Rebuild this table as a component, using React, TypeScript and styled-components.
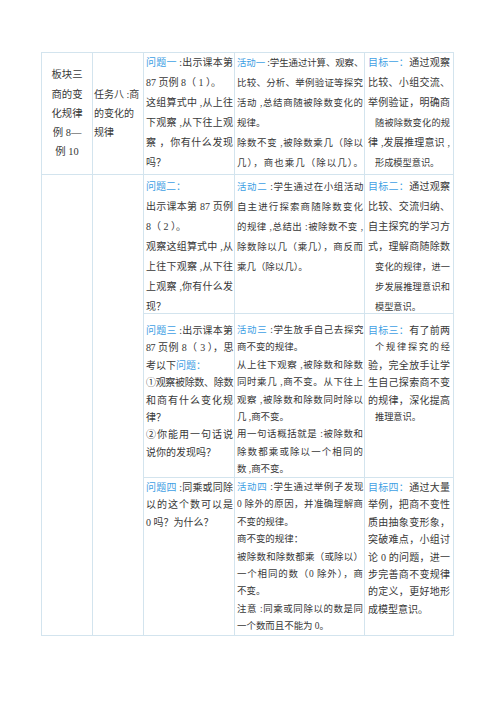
import React from "react";
import styled, { createGlobalStyle } from "styled-components";

const BORDER = "#d3e4ee";
const BLUE = "#3ea0e4";
const TEXT = "#383838";

const GlobalStyle = createGlobalStyle`
  html, body { margin: 0; padding: 0; background: #ffffff; }
  body { font-family: "Liberation Serif", "Noto Sans CJK SC", serif; }
`;

const Page = styled.div`
  width: 500px;
  height: 707px;
  box-sizing: border-box;
  padding: 52px 0 0 41px;
`;

const Table = styled.div`
  display: grid;
  grid-template-columns: 51px 51px 91px 130px 89px;
  grid-template-rows: 122px 139px 164px 158px;
  width: 413px;
  box-sizing: border-box;
  border-top: 1px solid ${BORDER};
  border-left: 1px solid ${BORDER};
  color: ${TEXT};
  font-size: 10px;
`;

const Cell = styled.div<{ $pt?: number; $lh?: number }>`
  box-sizing: border-box;
  border-right: 1px solid ${BORDER};
  border-bottom: 1px solid ${BORDER};
  padding-top: ${(p) => p.$pt ?? 0}px;
  line-height: ${(p) => p.$lh ?? 20}px;
  min-width: 0;
`;

const BlockCell = styled(Cell)`
  display: flex;
  flex-direction: column;
  justify-content: center;
  align-items: center;
  font-size: 10.4px;
  line-height: 19.3px;
  text-align: center;
`;

const TaskCell = styled(Cell)`
  display: flex;
  flex-direction: column;
  justify-content: center;
  padding-left: 1px;
  line-height: 19px;
`;

const SpanCell = styled(Cell)<{ $col: number }>`
  grid-column: ${(p) => p.$col};
  grid-row: 2 / span 3;
`;

const QuestionCell = styled(Cell)`
  padding-left: 2px;
  padding-right: 1px;
`;

const ActivityCell = styled(Cell)`
  padding-left: 2px;
  padding-right: 1px;
  font-size: 9.45px;
`;

const GoalCell = styled(Cell)`
  padding-left: 3px;
  padding-right: 3px;
`;

const Line = styled.div<{ $fill?: boolean; $indent?: boolean; $tight?: boolean }>`
  text-align: left;
  text-align-last: ${(p) => (p.$fill ? "justify" : "left")};
  padding-left: ${(p) => (p.$indent ? 7 : 0)}px;
  font-size: ${(p) => (p.$indent ? "9.2px" : "inherit")};
  letter-spacing: ${(p) => (p.$tight ? "-0.4px" : "0")};
  white-space: pre;
`;

const Label = styled.span`
  color: ${BLUE};
`;

type L = [string, string?];

const renderText = (s: string) =>
  s
    .split(/(\[[^\]]*\])/)
    .filter(Boolean)
    .map((part, i) =>
      part.startsWith("[") ? (
        <Label key={i}>{part.slice(1, -1)}</Label>
      ) : (
        <React.Fragment key={i}>{part}</React.Fragment>
      )
    );

const Lines = ({ lines }: { lines: L[] }) => (
  <>
    {lines.map(([t, f = ""], i) => (
      <Line
        key={i}
        $fill={f.includes("f")}
        $indent={f.includes("i")}
        $tight={f.includes("t")}
      >
        {renderText(t)}
      </Line>
    ))}
  </>
);

type Row = { pt: number; lh: number; q: L[]; a: L[]; g: L[] };

const rows: Row[] = [
  {
    pt: 0,
    lh: 20,
    q: [
      ["[问题一] :出示课本第", "f"],
      ["87 页例 8（ 1 ）。"],
      ["这组算式中 ,从上往", "f"],
      ["下观察 ,从下往上观", "f"],
      ["察 ，你有什么发现", "f"],
      ["吗？"],
    ],
    a: [
      ["[活动一] :学生通过计算、观察、", "ft"],
      ["比较、分析、举例验证等探究", "f"],
      ["活动 ,总结商随被除数变化的", "f"],
      ["规律。"],
      ["除数不变 ,被除数乘几（除以", "f"],
      ["几），商也乘几（除以几）。", "f"],
    ],
    g: [
      ["[目标一：]通过观察", "f"],
      ["比较、小组交流、", "f"],
      ["举例验证，明确商", "f"],
      ["随被除数变化的规", "fi"],
      ["律 ,发展推理意识 ,", "f"],
      ["形成模型意识。", "i"],
    ],
  },
  {
    pt: 2,
    lh: 20,
    q: [
      ["[问题二：]"],
      ["出示课本第 87 页例", "f"],
      ["8（ 2 ）。"],
      ["观察这组算式中 ,从", "f"],
      ["上往下观察 ,从下往", "f"],
      ["上观察 ,你有什么发", "f"],
      ["现？"],
    ],
    a: [
      ["[活动二] :学生通过在小组活动", "ft"],
      ["自主进行探索商随除数变化", "f"],
      ["的规律 ,总结出 :被除数不变 ,", "f"],
      ["除数除以几（乘几），商反而", "f"],
      ["乘几（除以几）。"],
    ],
    g: [
      ["[目标二：]通过观察", "f"],
      ["比较、交流归纳、", "f"],
      ["自主探究的学习方", "f"],
      ["式，理解商随除数", "f"],
      ["变化的规律，进一", "fi"],
      ["步发展推理意识和", "fi"],
      ["模型意识。", "i"],
    ],
  },
  {
    pt: 8,
    lh: 17.4,
    q: [
      ["[问题三] :出示课本第", "f"],
      ["87 页例 8（ 3 ），思", "ft"],
      ["考以下[问题：]"],
      ["①观察被除数、除数", "ft"],
      ["和商有什么变化规", "f"],
      ["律？"],
      ["②你能用一句话说", "f"],
      ["说你的发现吗？"],
    ],
    a: [
      ["[活动三] :学生放手自己去探究", "ft"],
      ["商不变的规律。"],
      ["从上往下观察 ,被除数和除数", "f"],
      ["同时乘几 ,商不变。从下往上", "f"],
      ["观察 ,被除数和除数同时除以", "f"],
      ["几 ,商不变。"],
      ["用一句话概括就是 :被除数和", "f"],
      ["除数都乘或除以一个相同的", "f"],
      ["数 ,商不变。"],
    ],
    g: [
      ["[目标三：]有了前两", "f"],
      ["个规律探究的经", "fi"],
      ["验，完全放手让学", "f"],
      ["生自己探索商不变", "f"],
      ["的规律，深化提高", "f"],
      ["推理意识。", "i"],
    ],
  },
  {
    pt: 1,
    lh: 17.4,
    q: [
      ["[问题四] :同乘或同除", "f"],
      ["以的这个数可以是", "f"],
      ["0 吗？为什么？"],
    ],
    a: [
      ["[活动四] :学生通过举例子发现", "ft"],
      ["0 除外的原因，并准确理解商", "f"],
      ["不变的规律。"],
      ["商不变的规律："],
      ["被除数和除数都乘（或除以）", "f"],
      ["一个相同的数（0 除外），商", "f"],
      ["不变。"],
      ["注意 :同乘或同除以的数是同", "f"],
      ["一个数而且不能为 0。"],
    ],
    g: [
      ["[目标四：]通过大量", "f"],
      ["举例，把商不变性", "f"],
      ["质由抽象变形象，", "f"],
      ["突破难点，小组讨", "f"],
      ["论 0 的问题，进一", "f"],
      ["步完善商不变规律", "f"],
      ["的定义，更好地形", "f"],
      ["成模型意识。"],
    ],
  },
];

export default function App() {
  return (
    <Page>
      <GlobalStyle />
      <Table>
        <BlockCell>
          <div>板块三</div>
          <div>商的变</div>
          <div>化规律</div>
          <div>例 8—</div>
          <div>例 10</div>
        </BlockCell>
        <TaskCell>
          <div>任务八 :商</div>
          <div>的变化的</div>
          <div>规律</div>
        </TaskCell>
        {rows.map((r, i) => (
          <React.Fragment key={i}>
            {i === 1 && (
              <>
                <SpanCell $col={1} />
                <SpanCell $col={2} />
              </>
            )}
            <QuestionCell $pt={r.pt} $lh={r.lh}>
              <Lines lines={r.q} />
            </QuestionCell>
            <ActivityCell $pt={r.pt} $lh={r.lh}>
              <Lines lines={r.a} />
            </ActivityCell>
            <GoalCell $pt={r.pt} $lh={r.lh}>
              <Lines lines={r.g} />
            </GoalCell>
          </React.Fragment>
        ))}
      </Table>
    </Page>
  );
}
